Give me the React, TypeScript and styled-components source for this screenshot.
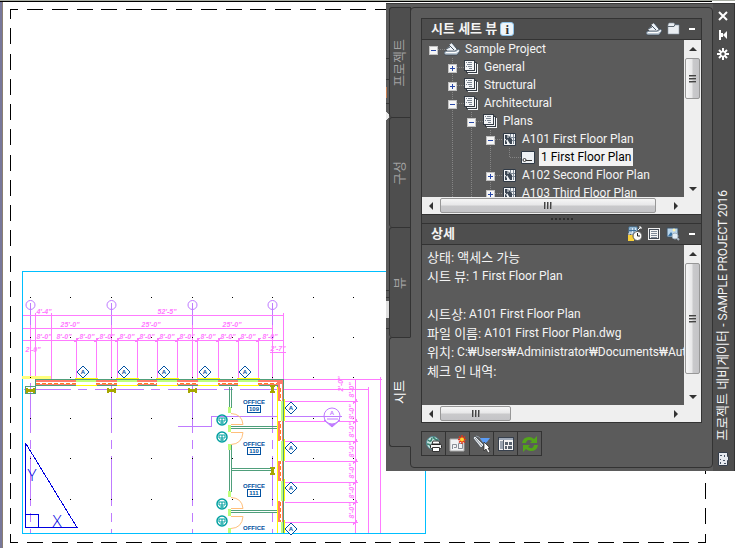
import React from "react";
import styled, { createGlobalStyle } from "styled-components";

const LATIN = `Roboto, "Noto Sans CJK KR", sans-serif`;
const C = {
  face: "#5b5b5b",
  dark: "#4e4e4e",
  line: "#333333",
  text: "#f4f4f4",
  pink: "#ff7bff",
  purple: "#bf7bff",
  cyan: "#00bfff",
  navy: "#0050a0",
  wall: "#4f9f7b",
  salmon: "#ff7b6b",
  lime: "#bfff7b",
  olive: "#a6a600",
  teal: "#00a0a0",
};

const GlobalStyle = createGlobalStyle`
  * { box-sizing: border-box; }
  body { margin: 0; background: #fff; font-family: ${LATIN}; font-size: 12px; overflow: hidden; }
  button { font: inherit; color: inherit; background: none; border: 0; padding: 0; margin: 0; }
`;

const Workspace = styled.main`
  position: relative;
  min-height: 100vh;
  border-top: 1px solid #a9aea4;
  overflow: hidden;
`;

const Drawing = styled.svg`
  display: block;
  margin-top: -1px;
`;

const Palette = styled.section`
  position: absolute;
  top: 2px;
  left: 386px;
  right: 0;
  display: flex;
  padding: 3px 0;
  background: ${C.face};
  border-top: 1px solid #3a3a3a;
  color: ${C.text};
`;

const TabList = styled.div`
  display: flex;
  flex-direction: column;
  width: 22px;
  margin-right: -1px;
  z-index: 1;
`;

const Tab = styled.button<{ $active?: boolean }>`
  height: 110px;
  display: flex;
  align-items: center;
  justify-content: center;
  font-size: 13px;
  border: 1px solid ${C.line};
  border-bottom-width: ${(p) => (p.$active ? "1px" : "0")};
  border-right-color: ${(p) => (p.$active ? C.face : C.line)};
  border-radius: 3px 0 0 3px;
  background: ${(p) => (p.$active ? C.face : C.dark)};
  color: ${(p) => (p.$active ? "#fff" : "#a2a2a2")};
`;

const Sideways = styled.span`
  writing-mode: vertical-rl;
  text-orientation: sideways;
  transform: rotate(180deg);
  white-space: nowrap;
  line-height: 20px;
`;

const Content = styled.div`
  flex: 1;
  min-width: 0;
  padding: 10px;
  border: 1px solid ${C.line};
  border-radius: 4px;
`;

const Panel = styled.section`
  border: 1px solid ${C.line};
`;

const PanelHeader = styled.header`
  display: flex;
  align-items: center;
  height: 21px;
  padding: 0 1px 0 9px;
  background: ${C.dark};
  border-bottom: 1px solid ${C.line};
`;

const PanelTitle = styled.h2`
  margin: 0;
  font-size: 13px;
  font-weight: 700;
  line-height: 20px;
  white-space: nowrap;
`;

const HeaderTools = styled.div`
  display: flex;
  align-items: center;
  gap: 3px;
  margin-left: auto;
`;

const IconButton = styled.button`
  display: flex;
  align-items: center;
  justify-content: center;
  width: 16px;
  height: 16px;
`;

const InfoButton = styled.button`
  width: 14px;
  height: 14px;
  margin-left: 3px;
  border: 1px solid #8fc4ea;
  border-radius: 3px;
  background: #eef5fa;
  color: #333;
  font: 700 13px/11px "Liberation Serif", serif;
`;

const Minimize = styled.button`
  width: 16px;
  height: 16px;
  display: flex;
  align-items: center;
  justify-content: center;
  &::before {
    content: "";
    width: 6px;
    height: 2px;
    background: #fff;
  }
`;

const ScrollGrid = styled.div<{ $rows: number }>`
  display: grid;
  grid-template-columns: minmax(0, 1fr) 17px;
  grid-template-rows: ${(p) => p.$rows}px 17px;
`;

const Bar = styled.div<{ $vertical?: boolean }>`
  display: flex;
  flex-direction: ${(p) => (p.$vertical ? "column" : "row")};
  background: #efefef;
  min-width: 0;
  min-height: 0;
`;

const Corner = styled.div`
  background: #efefef;
`;

const Arrow = styled.button`
  flex: none;
  width: 17px;
  height: 17px;
  display: flex;
  align-items: center;
  justify-content: center;
`;

const Thumb = styled.div<{ $vertical?: boolean; $size: number }>`
  flex: none;
  display: flex;
  align-items: center;
  justify-content: center;
  margin: ${(p) => (p.$vertical ? "1px 1px auto" : "1px auto 1px 1px")};
  width: ${(p) => (p.$vertical ? "15px" : p.$size + "px")};
  height: ${(p) => (p.$vertical ? p.$size + "px" : "15px")};
  border: 1px solid #979797;
  border-radius: 2px;
  background: linear-gradient(${(p) => (p.$vertical ? "90deg" : "180deg")}, #f6f6f6, #e8e8e9 45%, #c9c9cb 55%, #c4c4c7);
`;

const Tree = styled.ul`
  margin: 0;
  padding: 0;
  list-style: none;
  overflow: hidden;
`;

const TreeRow = styled.li<{ $depth: number }>`
  position: relative;
  display: flex;
  align-items: center;
  height: 18px;
  padding-left: ${(p) => p.$depth * 19 + 6}px;
  line-height: 18px;
  white-space: nowrap;
`;

const Guides = styled.svg`
  position: absolute;
  left: 0;
  top: 0;
  width: 120px;
  height: 18px;
`;

const Expander = styled.button<{ $open: boolean }>`
  position: relative;
  flex: none;
  width: 9px;
  height: 9px;
  margin: 2px 6px 0 1px;
  border: 1px solid #c2c2c2;
  background:
    linear-gradient(#2747a8, #2747a8) center / 5px 1px no-repeat,
    linear-gradient(#2747a8, #2747a8) center / 1px ${(p) => (p.$open ? 0 : 5)}px no-repeat,
    #f6f6f6;
`;

const ExpanderSpace = styled.span`
  flex: none;
  width: 16px;
`;

const NodeIcon = styled.span`
  position: relative;
  flex: none;
  width: 16px;
  height: 16px;
  margin-right: 3px;
`;

const NodeLabel = styled.span<{ $selected?: boolean }>`
  padding: 0 2px;
  background: ${(p) => (p.$selected ? "#f2f2f2" : "transparent")};
  color: ${(p) => (p.$selected ? "#000" : "inherit")};
`;

const Splitter = styled.div`
  height: 8px;
  display: flex;
  align-items: center;
  justify-content: center;
  gap: 2px;
  background: ${C.dark};
  border: solid ${C.line};
  border-width: 0 1px;
`;

const Grip = styled.i`
  width: 2px;
  height: 2px;
  background: #2e2e2e;
`;

const Details = styled.dl`
  margin: 0;
  padding: 3px 0 0 5px;
  overflow: hidden;
`;

const DetailRow = styled.div`
  display: flex;
  gap: 3px;
  height: 19px;
  line-height: 19px;
  white-space: nowrap;
  dt { font-size: 13px; }
  dd { margin: 0; }
`;

const Toolbar = styled.div`
  display: flex;
  margin-top: 8px;
  margin-bottom: 1px;
`;

const ToolButton = styled.button`
  width: 25px;
  height: 25px;
  margin-right: -1px;
  display: flex;
  align-items: center;
  justify-content: center;
  border: 1px solid ${C.line};
`;

const TitleBar = styled.header`
  display: flex;
  flex-direction: column;
  align-items: center;
  width: 22px;
  margin: -3px 0;
  padding: 4px 2px 4px 0;
  gap: 3px;
  background: ${C.dark};
  border-right: 1px solid ${C.line};
`;

const WindowTitle = styled.h1`
  margin: auto 0 4px;
  font-size: 13px;
  font-weight: 400;
`;

const TitleLatin = styled.span`
  font-size: 12px;
`;

const ArrowGlyph = ({ d }: { d: string }) => (
  <svg width="8" height="8" viewBox="0 0 8 8"><path d={d} fill="#333" /></svg>
);

const GripGlyph = ({ vertical }: { vertical?: boolean }) => (
  <svg width="8" height="8" viewBox="0 0 8 8" shapeRendering="crispEdges">
    <path d={vertical ? "M0 0h7v1H0zM0 3h7v1H0zM0 6h7v1H0z" : "M0 0h1v7H0zM3 0h1v7H3zM6 0h1v7H6z"} fill="#444" />
    <path d={vertical ? "M0 1h7v1H0zM0 4h7v1H0zM0 7h7v1H0z" : "M1 0h1v7H1zM4 0h1v7H4zM7 0h1v7H7z"} fill="#999" />
  </svg>
);

const Scroll = ({ vertical, size, name }: { vertical?: boolean; size: number; name: string }) => (
  <Bar $vertical={vertical}>
    <Arrow aria-label={name + " back"}><ArrowGlyph d={vertical ? "M0 6L4 2L8 6Z" : "M6 0L2 4L6 8Z"} /></Arrow>
    <Thumb $vertical={vertical} $size={size}><GripGlyph vertical={vertical} /></Thumb>
    <Arrow aria-label={name + " forward"}><ArrowGlyph d={vertical ? "M0 2L4 6L8 2Z" : "M2 0L6 4L2 8Z"} /></Arrow>
  </Bar>
);

const SheetSetIcon = () => (
  <svg width="16" height="16" viewBox="0 0 16 16">
    <path d="M2 8L6 5L5 4L8 2L13 8L11 11H4Z" fill="#edf2f7" />
    <path d="M5 4L10 9M2 8L6 6M8 2L13 8" fill="none" stroke="#44515e" />
    <path d="M0 12Q0 10 2 10H11L14 8Q16 8 16 10L13 14H2Q0 14 0 12Z" fill="#b9c6d2" stroke="#34414e" strokeWidth=".7" />
    <path d="M2 11.500H12L15 9.500" fill="none" stroke="#fff" />
  </svg>
);

const SubsetIcon = () => (
  <svg width="16" height="16" viewBox="0 0 16 16" shapeRendering="crispEdges">
    <path d="M5.500 5.500H14.500V14.500H5.500ZM3.500 3.500H12.500V12.500H3.500Z" fill="#f4f5f7" stroke="#f4f5f7" />
    <path d="M3 3H13V13H3Z" fill="#f4f5f7" stroke="#343b44" />
    <path d="M1 1H11V11H1Z" fill="#f4f5f7" stroke="#343b44" />
    <path d="M3 3h1v1H3zM5 3h4v1H5zM4 5h5v1H4zM3 7h1v1H3zM5 7h4v1H5zM6 9h3v1H6z" fill="#7b8592" />
  </svg>
);

const SheetIcon = () => (
  <svg width="16" height="16" viewBox="0 0 16 16">
    <path d="M2.500 2.500H14.500V14.500H2.500Z" fill="#f1f3f5" stroke="#2f3945" />
    <path d="M4 4H7L11 8V13H9L6 8V13H4Z" fill="#3b4653" />
    <path d="M4 8L8 13M7 4V7" stroke="#f1f3f5" fill="none" />
    <path d="M9.500 3V6.500M9 6.500H14M12.500 3V13M11 9.500H14" stroke="#808b98" fill="none" />
  </svg>
);

const ViewIcon = () => (
  <svg width="16" height="16" viewBox="0 0 16 16">
    <path d="M1.500 2.500H14.500V14.500H1.500Z" fill="#eef1f4" stroke="#2f3945" />
    <circle cx="4.500" cy="11" r="1.500" fill="#fff" stroke="#333" />
    <path d="M6 11.500H12" stroke="#333" />
  </svg>
);

const FolderIcon = () => (
  <svg width="16" height="16" viewBox="0 0 16 16">
    <path d="M3 4L4 2H9L10 4H14V13H3Z" fill="#e9edf1" stroke="#8c98a4" strokeWidth=".6" />
    <path d="M3 5.500H9L10 3.500H14" fill="none" stroke="#5a6570" />
  </svg>
);

const StatusIcon = () => (
  <svg width="16" height="16" viewBox="0 0 16 16">
    <path d="M2 1H10V8H2Z" fill="#d7e8f4" stroke="#4b7fa8" />
    <path d="M4 2V7M2 4.500H9M7 2V7" stroke="#3c6f9a" />
    <path d="M1 9H7V15H1Z" fill="#f7cf3a" />
    <path d="M2 9V7H5V9" fill="none" stroke="#e9e9e9" />
    <circle cx="10.500" cy="10" r="4.500" fill="#fafafa" stroke="#555" />
    <path d="M10.500 7V10H13" fill="none" stroke="#222" />
    <path d="M11 4L14 1M12 1H14V3" fill="none" stroke="#fff" />
  </svg>
);

const ListIcon = () => (
  <svg width="16" height="16" viewBox="0 0 16 16" shapeRendering="crispEdges">
    <path d="M2 2H14V14H2Z" fill="#f0f0f0" />
    <path d="M3 3H13V13H3Z" fill="#444b55" />
    <path d="M4 4H12V12H4Z" fill="#f5f5f5" />
    <path d="M5 5h6v1H5zM5 7h6v1H5zM5 9h6v1H5zM5 11h6v1H5z" fill="#7e8997" />
  </svg>
);

const PreviewIcon = () => (
  <svg width="16" height="16" viewBox="0 0 16 16">
    <path d="M2 2H13V11H2Z" fill="#b8d5ec" stroke="#3d5062" />
    <path d="M3 10L6 6L9 10Z" fill="#3873a6" /><circle cx="9" cy="4" r="1.500" fill="#fff3b0" />
    <circle cx="10" cy="10" r="3" fill="#e3edf4" stroke="#9fb0bf" />
    <path d="M12 12L14 14" stroke="#aab6c1" strokeWidth="2" />
  </svg>
);

const PublishIcon = () => (
  <svg width="18" height="18" viewBox="0 0 18 18">
    <circle cx="8" cy="8" r="6.500" fill="#c5e3e0" stroke="#4e8590" />
    <path d="M3 5Q6 8 7 3M8 2Q10 5 13 5M2 9Q6 9 6 13" fill="none" stroke="#37806e" strokeWidth="1.500" />
    <path d="M7 9L8 6H14L15 9Z" fill="#fff" stroke="#333" />
    <rect x="5.500" y="9.500" width="11" height="4" rx="1" fill="#f5f5f5" stroke="#222" />
    <path d="M7.500 12.500H14.500V16.500H7.500Z" fill="#fff" stroke="#333" />
  </svg>
);

const NewSheetIcon = () => (
  <svg width="18" height="18" viewBox="0 0 18 18">
    <path d="M1 4H15V16H1Z" fill="#f2f3f5" stroke="#aaa" />
    <path d="M3.500 14V9.500H7.500V12.500H5M9.500 14V8.500H13.500V13.500H10" fill="none" stroke="#8a8f98" />
    <path d="M13 0V9M9 4.500H17M10 1.500L16 7.500M16 1.500L10 7.500" stroke="#e0351c" strokeWidth="1.500" />
    <circle cx="13" cy="4.500" r="2" fill="#ffd62e" />
  </svg>
);

const SelectIcon = () => (
  <svg width="18" height="18" viewBox="0 0 18 18">
    <path d="M0 3L2 1L11 10L8 13Z" fill="#e6e9ec" stroke="#39434d" strokeWidth=".7" />
    <path d="M2 3L9 11M3 1L6 2L12 9" stroke="#8b959f" fill="none" />
    <path d="M7 3H17L14 7L11 9Z" fill="#5b9cf5" />
    <path d="M11 7V16L13 14L15 18L17 17L15 13H17Z" fill="#fff" stroke="#222" strokeWidth=".7" />
  </svg>
);

const LayoutIcon = () => (
  <svg width="18" height="18" viewBox="0 0 18 18" shapeRendering="crispEdges">
    <path d="M1 2H17V16H1Z" fill="#37404d" />
    <path d="M2 3H16V15H2Z" fill="#f4f4f4" />
    <path d="M2 3H16V5H2Z" fill="#9fa9b8" /><path d="M3 6H6V14H3Z" fill="#9aa3af" />
    <path d="M6 5h1v10H6z" fill="#55606d" />
    <path d="M8 7h3v3H8zM12 7h3v3h-3zM8 11h2v3H8zM11 11h4v3h-4z" fill="#59636f" />
  </svg>
);

const RefreshIcon = () => (
  <svg width="18" height="18" viewBox="0 0 18 18">
    <path d="M1 8Q2 2 8 2Q11 2 13 4L16 1V8H9L11 6Q6 3 5 8ZM17 10Q16 16 10 16Q7 16 5 14L2 17V10H9L7 12Q12 15 13 10Z" fill="#53a51a" />
  </svg>
);

type TreeNode = { depth: number; text: string; icon: React.FC; open?: boolean; selected?: boolean; guides: string };
const branch = (depth: number) => `M${depth * 19 + 12} 9.500H${depth * 19 + 24}`;
const NODES: TreeNode[] = [
  { depth: 0, text: "Sample Project", icon: SheetSetIcon, open: true, guides: branch(0) },
  { depth: 1, text: "General", icon: SubsetIcon, open: false, guides: branch(1) + "M30.500 0V18" },
  { depth: 1, text: "Structural", icon: SubsetIcon, open: false, guides: branch(1) + "M30.500 0V18" },
  { depth: 1, text: "Architectural", icon: SubsetIcon, open: true, guides: branch(1) + "M30.500 0V18" },
  { depth: 2, text: "Plans", icon: SubsetIcon, open: true, guides: branch(2) + "M30.500 0V18M49.500 0V18" },
  { depth: 3, text: "A101 First Floor Plan", icon: SheetIcon, open: true, guides: branch(3) + "M30.500 0V18M49.500 0V18M68.500 0V18" },
  { depth: 4, text: "1 First Floor Plan", icon: ViewIcon, selected: true, guides: "M87.500 0V9M88 9.500H100M30.500 0V18M49.500 0V18M68.500 0V18" },
  { depth: 3, text: "A102 Second Floor Plan", icon: SheetIcon, open: false, guides: branch(3) + "M30.500 0V18M49.500 0V18M68.500 0V18" },
  { depth: 3, text: "A103 Third Floor Plan", icon: SheetIcon, open: false, guides: branch(3) + "M30.500 0V18M49.500 0V18M68.500 0V18" },
];

const DETAILS: [string, string][] = [
  ["상태: 액세스 가능", ""],
  ["시트 뷰:", "1 First Floor Plan"],
  ["", ""],
  ["시트상:", "A101 First Floor Plan"],
  ["파일 이름:", "A101 First Floor Plan.dwg"],
  ["위치:", "C:₩Users₩Administrator₩Documents₩Autodesk"],
  ["체크 인 내역:", ""],
];

const dashes = (from: number, to: number, first: number, period: number, make: (a: number, b: number) => string) => {
  let d = "";
  for (let p = first; p < to; p += period) {
    const a = Math.max(from, Math.round(p));
    const b = Math.min(to, Math.round(p) + 16);
    if (b > a) d += make(a, b);
  }
  return d;
};

const gridX = [30, 111, 192, 272];
const windowsX = [76, 117, 157, 198, 238];
const windowsY = [401, 441, 481, 522];

const Dim = ({ x, y, v, children }: { x: number; y: number; v?: boolean; children: string }) => (
  <text x={x} y={y} textAnchor="middle" fontSize="7" fontStyle="italic" fontWeight="700" fill={C.pink} transform={v ? `rotate(-90 ${x} ${y})` : undefined}>{children}</text>
);

const Marker = ({ x, y }: { x: number; y: number }) => (
  <g>
    <path d={`M${x - 6} ${y}l6 -6l6 6l-6 6z`} fill="#fff" stroke={C.navy} />
    <text x={x} y={y + 2} textAnchor="middle" fontSize="6" fontWeight="700" fill={C.navy}>A</text>
  </g>
);

const Office = ({ y, no }: { y: number; no: string }) => (
  <g fill={C.navy} textAnchor="middle" fontSize="6" fontWeight="700">
    <text x="254" y={y + 2}>OFFICE</text>
    <rect x="247.500" y={y + 3.500} width="13" height="7" fill="none" stroke={C.navy} />
    <text x="254" y={y + 9}>{no}</text>
  </g>
);

const Plan = () => (
  <Drawing width="735" height="548" viewBox="0 0 735 548" role="img" aria-label="Floor plan" fontFamily="Liberation Sans, sans-serif">
    <g shapeRendering="crispEdges" fill="none">
      <path d="M0 0H712V1H0Z" fill="#a9aea4" />
      <path d="M0 1H712V2H0Z" fill="#000" />
      <path d="M0 2H2V548H0Z" fill="#77779a" />
      <path d="M2 2H3V548H2Z" fill="#8a7f73" />
      <path d={
        dashes(10, 705, 2, 24.84, (a, b) => `M${a} 9.500H${b}`) + dashes(10, 705, 2, 24.84, (a, b) => `M${a} 542.500H${b}`) + "M698 542.500H706" +
        dashes(10, 542, 3, 25.27, (a, b) => `M10.500 ${a}V${b}M705.500 ${a}V${b}`)
      } stroke="#000" />

      <path d="M22.500 271.500H425.500V533.500H22.500Z" stroke={C.cyan} />

      <path d={gridX.map((x) => `M${x}.5 303V360M${x}.5 367V376M${x}.5 383V433M${x}.5 440V449M${x}.5 456V506M${x}.5 513V522M${x}.5 529V533`).join("")} stroke={C.purple} />
      <path d="M24 389.500H71M78 389.500H87M95 389.500H144M151 389.500H160M168 389.500H217M224 389.500H233M240 389.500H283M178 426.500H211.500V416.500H342" stroke={C.purple} />

      <path d="M23 315.500H283M23 328.500H273M23 340.500H284M270 352.500H286M30.500 325V379M111.500 325V379M192.500 325V379M272.500 325V379M35.500 313V379M51.500 313V379M283.500 313V379" stroke={C.pink} />
      <path d={[76, 96, 117, 137, 157, 177, 197, 218, 238, 258].map((x) => `M${x}.5 338V379m-2 -37l4 -4`).join("")} stroke={C.pink} />
      <path d="M284 379.500H382M284 389.500H369M355.500 379V533M368.500 387V533M380.500 377V533" stroke={C.pink} />
      <path d={[401, 421, 441, 461, 482, 502, 522].map((y) => `M285 ${y}.5H358m-5 2l4 -4`).join("")} stroke={C.pink} />

      <path d="M35 379H284V533H277V386H35Z" fill={C.salmon} />
      <path d="M36 382h241v2H36zM280 384h2v149h-2z" fill="#fff" />
      <path d="M36 383.500H277M280.500 388V533" stroke="#ff7b1f" strokeDasharray="4 2" />
      <path d="M35 379.500H283.500V533M277.500 533V385.500H35.500V379" stroke={C.wall} />
      {windowsX.map((x) => (
        <g key={x}>
          <path d={`M${x} 379h20v8h-20z`} fill="#fff" />
          <path d={`M${x} 380h20v2h-20z`} fill={C.lime} />
          <path d={`M${x - 1} 378.500h23M${x} 385.500h21`} stroke="#ffff00" />
          <path d={`M${x} 379.500h20`} stroke={C.wall} />
        </g>
      ))}
      {windowsY.map((y) => (
        <g key={y}>
          <path d={`M277 ${y}h7v${y > 520 ? 11 : 20}h-7z`} fill="#fff" />
          <path d={`M281 ${y}h2v${y > 520 ? 11 : 20}h-2z`} fill={C.lime} />
          <path d={`M284.500 ${y - 2}v${y > 520 ? 13 : 22}`} stroke="#ffff00" />
          <path d={`M283.500 ${y}v${y > 520 ? 11 : 20}`} stroke={C.wall} />
        </g>
      ))}
      <path d="M277.500 387V533" stroke="#ffff00" />
      <path d="M22 376H51V379H22Z" fill="#ffff7b" />
      <path d="M25.500 386.500H35.500V393.500H25.500Z" stroke={C.wall} />
      <path d={[30, 111, 192].map((x) => `M${x - 4} 388h2v1h5v-1h2v5h-2v-1h-5v1h-2z`).join("") + "M270 385h5v2h-1v4h1v2h-5v-2h1v-4h-1zM270 467h5v2h-1v4h1v2h-5v-2h1v-4h-1z"} fill={C.olive} />

      <path d="M229.500 387V408M231.500 387V408M229.500 445V492M231.500 445V492M230 426.500H277M230 428.500H277M231 468.500H271M231 470.500H271M230 510.500H277M230 512.500H277" stroke={C.wall} />
      <path d="M228 407h3v6h-3zM228 425h3v7h-3zM228 444h3v6h-3zM228 491h3v6h-3zM228 509h3v7h-3zM228 528h3v5h-3z" fill={C.lime} />

      <path d={gridX.concat([70, 151, 232, 313, 353]).map((x) => [297, 337, 377, 418, 458, 499].map((y) => `M${x} ${y}h1v1h-1z`).join("")).join("")} fill="#000" />
      <path d="M25.500 443V527.500H77L25.500 443M25.500 514.500H38.500V527" stroke="#0000e0" />
    </g>

    <g fill="none" stroke={C.purple}>
      {gridX.map((x) => <circle key={x} cx={x + 0.5} cy="305" r="4.500" />)}
      <path d="M324 420L332 427L340 420Z" fill={C.purple} />
      <circle cx="332" cy="416" r="8" fill="#fff" />
      <path d="M322 416.500H342M327 419H338" />
    </g>
    <text x="332" y="415" textAnchor="middle" fontSize="6" fontWeight="700" fill={C.purple}>A</text>
    <g fill="none" stroke="#ffbf7b">
      <path d="M231 424.500H243Q242 414 231 413.500M231 432.500H243Q242 444 231 444.500M231 508.500H243Q242 498 231 497.500M231 516.500H243Q242 528 231 528.500" />
    </g>
    {[420, 437, 504, 521].map((y) => (
      <g key={y}>
        <circle cx="222" cy={y} r="5" fill="none" stroke={C.teal} strokeWidth="1.500" />
        <path d={`M219 ${y - 2}h6v3h-6zM222 ${y - 2}v6M220 ${y + 3}h4`} stroke={C.teal} fill="none" />
      </g>
    ))}
    {windowsX.map((x) => <Marker key={x} x={x + 7} y={372} />)}
    {[408, 448, 488, 529].map((y) => <Marker key={y} x={291} y={y} />)}
    <Office y={402} no="109" /><Office y={444} no="110" /><Office y={486} no="111" />
    <text x="254" y="530" textAnchor="middle" fontSize="6" fontWeight="700" fill={C.navy}>OFFICE</text>

    {[87, 107, 127, 147, 167, 187, 208, 228, 248, 270, 44, 64].map((x) => <Dim key={x} x={x} y={339}>8'-0"</Dim>)}
    {[70, 151, 232].map((x) => <Dim key={x} x={x} y={327}>25'-0"</Dim>)}
    <Dim x={44} y={314}>4'-4"</Dim><Dim x={167} y={314}>52'-5"</Dim>
    <Dim x={278} y={351}>2'-7"</Dim><Dim x={33} y={352}>2'-0"</Dim>
    {[390, 412, 430, 450, 471, 491, 511].map((y) => <Dim key={y} x={354} y={y} v>8'-0"</Dim>)}
    <Dim x={343} y={384} v>2'-0"</Dim>
    <g fill="#0000e0" fontFamily="Open Sans, sans-serif" fontWeight="300" fontSize="17" textAnchor="middle"><text x="32" y="481">Y</text><text x="57" y="527">X</text></g>
  </Drawing>
);

const EdgeStrip = () => (
  <svg width="3" height="461" viewBox="0 0 3 461" shapeRendering="crispEdges">
    <path d="M0 51.500H3M0 72.500H3M0 96.500H3M0 283.500H3M0 290.500H3M0 321.500H3" stroke="#383838" />
    <path d="M0 80H1V91H0Z" fill="#c47a4d" />
    <path d="M0 105L3 108V111L0 113Z" fill="#e8e8e8" />
    <path d="M0 294H3V311H0Z" fill="#dedede" />
  </svg>
);

export default function App() {
  return (
    <>
      <GlobalStyle />
      <Workspace>
        <Plan />
        <Palette aria-label="프로젝트 네비게이터">
          <EdgeStrip />
          <TabList role="tablist">
            {["프로젝트", "구성", "뷰", "시트"].map((t) => (
              <Tab key={t} role="tab" aria-selected={t === "시트"} $active={t === "시트"}><Sideways>{t}</Sideways></Tab>
            ))}
          </TabList>
          <Content>
            <Panel>
              <PanelHeader>
                <PanelTitle>시트 세트 뷰</PanelTitle>
                <InfoButton aria-label="Info">i</InfoButton>
                <HeaderTools>
                  <IconButton aria-label="Sheet set"><SheetSetIcon /></IconButton>
                  <IconButton aria-label="Folder"><FolderIcon /></IconButton>
                  <Minimize aria-label="Collapse" />
                </HeaderTools>
              </PanelHeader>
              <ScrollGrid $rows={157}>
                <Tree role="tree">
                  {NODES.map(({ icon: Icon, ...n }) => (
                    <TreeRow key={n.text} role="treeitem" aria-selected={!!n.selected} $depth={n.depth}>
                      <Guides><path d={n.guides} stroke="#858585" strokeDasharray="1 1" shapeRendering="crispEdges" fill="none" /></Guides>
                      {n.open === undefined ? <ExpanderSpace /> : <Expander $open={n.open} aria-label={"Toggle " + n.text} />}
                      <NodeIcon><Icon /></NodeIcon>
                      <NodeLabel $selected={n.selected}>{n.text}</NodeLabel>
                    </TreeRow>
                  ))}
                </Tree>
                <Scroll vertical size={41} name="Tree vertical" />
                <Scroll size={216} name="Tree horizontal" />
                <Corner />
              </ScrollGrid>
            </Panel>
            <Splitter>{[0, 1, 2, 3, 4, 5].map((i) => <Grip key={i} />)}</Splitter>
            <Panel>
              <PanelHeader>
                <PanelTitle>상세</PanelTitle>
                <HeaderTools>
                  <IconButton aria-label="Status"><StatusIcon /></IconButton>
                  <IconButton aria-label="List"><ListIcon /></IconButton>
                  <IconButton aria-label="Preview"><PreviewIcon /></IconButton>
                  <Minimize aria-label="Collapse" />
                </HeaderTools>
              </PanelHeader>
              <ScrollGrid $rows={160}>
                <Details>
                  {DETAILS.map(([k, v], i) => (
                    <DetailRow key={i}><dt>{k}</dt><dd>{v}</dd></DetailRow>
                  ))}
                </Details>
                <Scroll vertical size={111} name="Details vertical" />
                <Scroll size={71} name="Details horizontal" />
                <Corner />
              </ScrollGrid>
            </Panel>
            <Toolbar role="toolbar">
              <ToolButton aria-label="Publish"><PublishIcon /></ToolButton>
              <ToolButton aria-label="New sheet"><NewSheetIcon /></ToolButton>
              <ToolButton aria-label="Select"><SelectIcon /></ToolButton>
              <ToolButton aria-label="Layout"><LayoutIcon /></ToolButton>
              <ToolButton aria-label="Refresh"><RefreshIcon /></ToolButton>
            </Toolbar>
          </Content>
          <TitleBar>
            <IconButton aria-label="Close">
              <svg width="12" height="12" viewBox="0 0 12 12"><path d="M2 2L10 10M10 2L2 10" stroke="#fff" strokeWidth="2" /></svg>
            </IconButton>
            <IconButton aria-label="Auto-hide">
              <svg width="12" height="12" viewBox="0 0 12 12"><path d="M2 1H4V11H2ZM4 4H6V8H4ZM10 2V10L6 6Z" fill="#fff" /></svg>
            </IconButton>
            <IconButton aria-label="Properties">
              <svg width="12" height="12" viewBox="0 0 12 12"><path d="M6 0V3M6 9V12M0 6H3M9 6H12M2 2L4 4M8 8L10 10M10 2L8 4M4 8L2 10" stroke="#fff" strokeWidth="2" /><circle cx="6" cy="6" r="2.500" fill="none" stroke="#fff" strokeWidth="1.500" /></svg>
            </IconButton>
            <WindowTitle><Sideways>프로젝트 네비게이터 <TitleLatin>- SAMPLE PROJECT 2016</TitleLatin></Sideways></WindowTitle>
            <svg width="12" height="16" viewBox="0 0 12 16">
              <path d="M1.500 1.500H10.500V5.500H11.500V9.500H10.500V14.500H1.500Z" fill="#e5e8ee" stroke="#343d4a" />
              <path d="M3 4h2v1H3zM7 4h1v2H7zM3 8h1v1H3zM6 9h2v1H6zM3 11h1v2H3zM7 12h2v1H7z" fill="#475365" />
            </svg>
          </TitleBar>
        </Palette>
      </Workspace>
    </>
  );
}
